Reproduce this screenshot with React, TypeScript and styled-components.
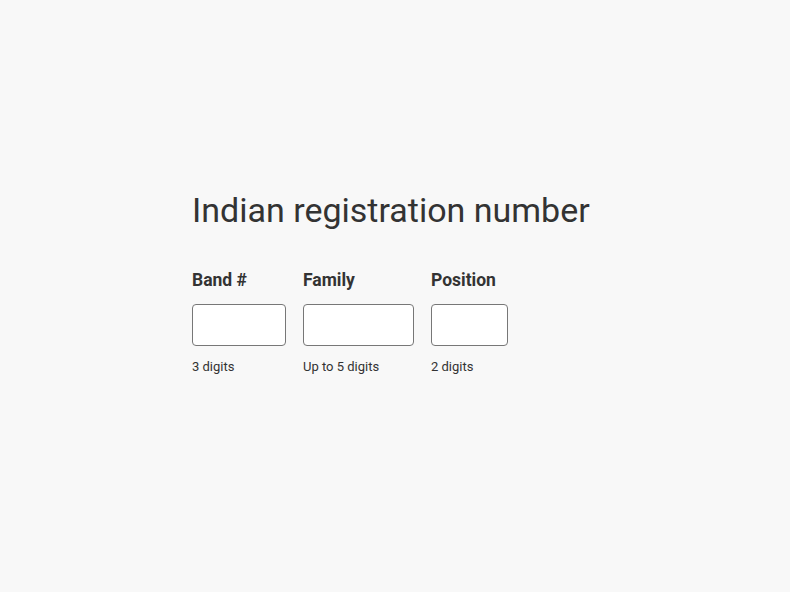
import styled, { createGlobalStyle } from "styled-components";

const GlobalStyle = createGlobalStyle`
  html, body {
    margin: 0;
    padding: 0;
    background: #f8f8f8;
  }
  body {
    font-family: Roboto, "Noto Sans", sans-serif;
    color: #333;
  }
`;

const Page = styled.main`
  min-height: 592px;
  box-sizing: border-box;
  padding: 186px 0 0 192px;
`;

const Title = styled.h1`
  margin: 0 0 36px;
  font-size: 34px;
  font-weight: 400;
  line-height: 48px;
  color: #333;
`;

const Fields = styled.div`
  display: flex;
  gap: 17px;
`;

const Field = styled.label`
  display: flex;
  flex-direction: column;
`;

const Label = styled.span`
  font-size: 17.5px;
  font-weight: 700;
  line-height: 20px;
  margin-bottom: 14px;
  color: #333;
`;

const Input = styled.input<{ $width: number }>`
  box-sizing: border-box;
  width: ${(p) => p.$width}px;
  height: 42px;
  border: 1px solid #777;
  border-radius: 4px;
  background: #fff;
  font: inherit;
  padding: 0 8px;
  margin: 0;
`;

const Hint = styled.span`
  margin-top: 13px;
  font-size: 13px;
  line-height: 16px;
  color: #333;
`;

const fields = [
  { label: "Band #", width: 94, hint: "3 digits" },
  { label: "Family", width: 111, hint: "Up to 5 digits" },
  { label: "Position", width: 77, hint: "2 digits" },
];

export default function App() {
  return (
    <>
      <GlobalStyle />
      <Page>
        <Title>Indian registration number</Title>
        <Fields>
          {fields.map((f) => (
            <Field key={f.label}>
              <Label>{f.label}</Label>
              <Input type="text" $width={f.width} />
              <Hint>{f.hint}</Hint>
            </Field>
          ))}
        </Fields>
      </Page>
    </>
  );
}
